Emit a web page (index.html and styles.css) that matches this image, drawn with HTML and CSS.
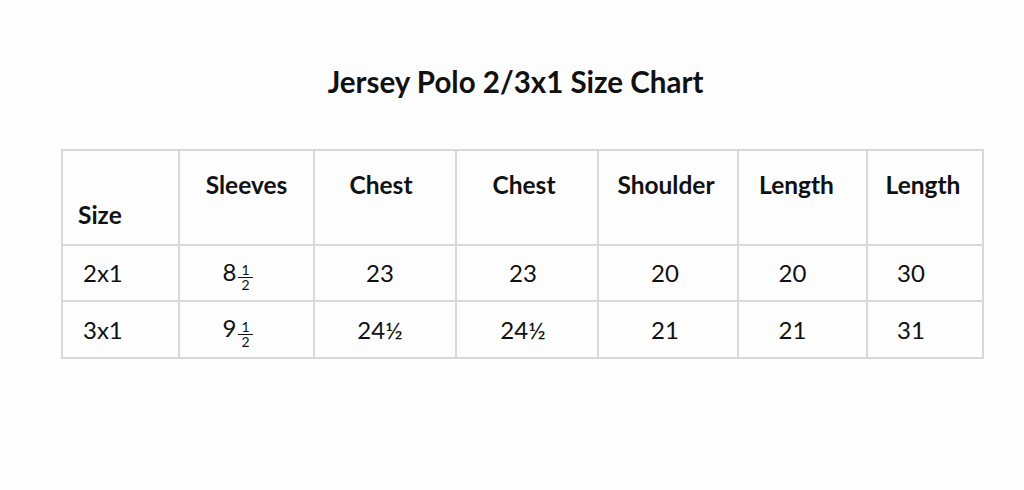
FILE: index.html
```html
<!DOCTYPE html>
<html lang="en">
<head>
<meta charset="utf-8">
<title>Jersey Polo 2/3x1 Size Chart</title>
<link rel="stylesheet" href="styles.css">
</head>
<body>
<main class="page">
  <h1 class="title">Jersey Polo 2/3x1 Size Chart</h1>
  <table class="chart">
    <colgroup>
      <col class="c1"><col class="c2"><col class="c3"><col class="c4"><col class="c5"><col class="c6"><col class="c7">
    </colgroup>
    <thead>
      <tr>
        <th class="size-head">Size</th>
        <th>Sleeves</th>
        <th>Chest</th>
        <th>Chest</th>
        <th>Shoulder</th>
        <th>Length</th>
        <th>Length</th>
      </tr>
    </thead>
    <tbody>
      <tr>
        <td class="size">2x1</td>
        <td>8<span class="frac"><span class="num">1</span><span class="den">2</span></span></td>
        <td>23</td>
        <td>23</td>
        <td>20</td>
        <td>20</td>
        <td>30</td>
      </tr>
      <tr class="last">
        <td class="size">3x1</td>
        <td>9<span class="frac"><span class="num">1</span><span class="den">2</span></span></td>
        <td>24½</td>
        <td>24½</td>
        <td>21</td>
        <td>21</td>
        <td>31</td>
      </tr>
    </tbody>
  </table>
</main>
</body>
</html>
```
FILE: styles.css
```css
html, body {
  margin: 0;
  padding: 0;
  background: #fdfdfd;
}
body {
  font-family: Lato, "Liberation Sans", sans-serif;
  color: #111;
  width: 1024px;
  height: 490px;
  overflow: hidden;
}
.page {
  padding: 66px 0 0 61px;
}
.title {
  margin: 0 0 51px 0;
  width: 921px;
  text-align: center;
  font-size: 29.5px;
  line-height: 32px;
  font-weight: 700;
  padding-right: 12px;
  box-sizing: border-box;
}
.chart {
  border-collapse: collapse;
  table-layout: fixed;
  width: 921px;
  font-size: 24px;
}
.c1 { width: 117px; }
.c2 { width: 135px; }
.c3 { width: 142px; }
.c4 { width: 142px; }
.c5 { width: 140px; }
.c6 { width: 129px; }
.c7 { width: 116px; }
.chart th, .chart td {
  border: 2px solid #d8d8d8;
  text-align: center;
  padding: 0;
}
.chart th {
  height: 95px;
  vertical-align: top;
  padding-top: 20px;
  font-weight: 700;
  font-size: 24.5px;
  line-height: 28px;
  box-sizing: border-box;
}
.chart th.size-head {
  vertical-align: bottom;
  text-align: left;
  padding: 0 0 15px 15px;
}
.chart td {
  height: 54px;
  vertical-align: middle;
  line-height: 28px;
  font-weight: 400;
}
.chart tr.last td {
  height: 55px;
}
.chart td.size {
  text-align: left;
  padding-left: 20px;
}

/* slight left bias of the centred values, as in the source chart */
.chart th:nth-child(3) { padding-right: 8px; }
.chart th:nth-child(4) { padding-right: 6px; }
.chart th:nth-child(5) { padding-right: 4px; }
.chart th:nth-child(6) { padding-right: 12px; }
.chart th:nth-child(7) { padding-right: 4px; }
.chart td:nth-child(2) { padding-right: 18px; }
.chart td:nth-child(3) { padding-right: 10px; }
.chart td:nth-child(4) { padding-right: 8px; }
.chart td:nth-child(5) { padding-right: 6px; }
.chart td:nth-child(6) { padding-right: 20px; }
.chart td:nth-child(7) { padding-right: 28px; }

.frac {
  display: inline-flex;
  flex-direction: column;
  align-items: center;
  vertical-align: middle;
  font-size: 14px;
  line-height: 12px;
  margin-left: 2px;
  position: relative;
  top: 3px;
}
.frac .num {
  padding: 0 3px 1px;
  border-bottom: 1px solid #111;
}
.frac .den {
  padding-top: 1px;
}
```
